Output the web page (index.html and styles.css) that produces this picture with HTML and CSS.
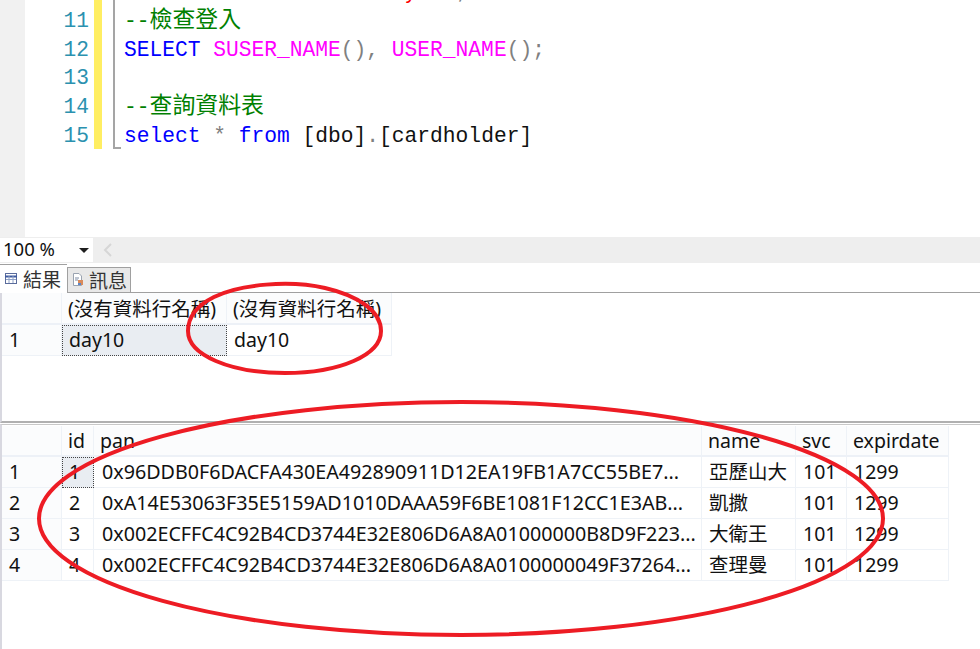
FILE: index.html
```html
<!DOCTYPE html>
<html>
<head>
  <title>SQL Query Results</title>
  <meta charset="utf-8">
  <link rel="stylesheet" href="styles.css">
</head>
<body>
  <div class="page">

    <div class="editor">
      <div class="gutter"></div>
      <div class="numbers">
        <div class="num">10</div>
        <div class="num">11</div>
        <div class="num">12</div>
        <div class="num">13</div>
        <div class="num">14</div>
        <div class="num">15</div>
      </div>
      <div class="changed"></div>
      <div class="fold"></div>
      <div class="code">
        <div class="line"><span class="kw">EXECUTE AS LOGIN</span> <span class="op">=</span> <span class="str">'day10'</span><span class="op">;</span></div>
        <div class="line comment">--<span class="cjk">檢查登入</span></div>
        <div class="line"><span class="kw">SELECT</span> <span class="fn">SUSER_NAME</span><span class="op">()</span><span class="op">,</span> <span class="fn">USER_NAME</span><span class="op">()</span><span class="op">;</span></div>
        <div class="line"></div>
        <div class="line comment">--<span class="cjk">查詢資料表</span></div>
        <div class="line"><span class="kw">select</span> <span class="op">*</span> <span class="kw">from</span> [dbo]<span class="op">.</span>[cardholder]</div>
      </div>
    </div>

    <div class="statusbar">
      <div class="zoom">100 %<span class="caret"></span></div>
      <svg class="scroll-left" width="10" height="14" viewBox="0 0 10 14"><path d="M8 1 L2 7 L8 13" fill="none" stroke="#d6d6d6" stroke-width="2"/></svg>
    </div>

    <div class="tabs">
      <div class="tab active">
        <svg class="tab-icon" width="12" height="11" viewBox="0 0 12 11"><rect x="0.5" y="0.5" width="11" height="10" fill="#fff" stroke="#5a6c9c"/><path d="M0 3.500H12" stroke="#3f5a9e" stroke-width="2"/><path d="M4 3V10M8 3V10M1 6.500H11" stroke="#8fa2c8"/></svg>
        結果
      </div>
      <div class="tab">
        <svg class="tab-icon" width="12" height="13" viewBox="0 0 12 13"><path d="M1.500 .5H7L9.500 3V12.500H1.500Z" fill="#fff" stroke="#9aa3b0"/><path d="M3 5H7M3 7H6" stroke="#7d8ba5"/><rect x="6" y="7" width="5" height="5" fill="#d98a5a"/><rect x="6" y="10" width="3" height="2" fill="#5a86c8"/></svg>
        訊息
      </div>
    </div>

    <div class="results">
      <div class="grid grid-one">
        <div class="cell head"></div>
        <div class="cell head">(沒有資料行名稱)</div>
        <div class="cell head">(沒有資料行名稱)</div>
        <div class="cell rownum">1</div>
        <div class="cell selected">day10</div>
        <div class="cell">day10</div>
      </div>
    </div>

    <div class="results second">
      <div class="grid grid-two">
        <div class="cell head"></div>
        <div class="cell head">id</div>
        <div class="cell head">pan</div>
        <div class="cell head">name</div>
        <div class="cell head">svc</div>
        <div class="cell head">expirdate</div>

        <div class="cell rownum">1</div>
        <div class="cell selected">1</div>
        <div class="cell hex">0x96DDB0F6DACFA430EA492890911D12EA19FB1A7CC55BE7...</div>
        <div class="cell">亞歷山大</div>
        <div class="cell">101</div>
        <div class="cell">1299</div>

        <div class="cell rownum">2</div>
        <div class="cell">2</div>
        <div class="cell hex">0xA14E53063F35E5159AD1010DAAA59F6BE1081F12CC1E3AB...</div>
        <div class="cell">凱撒</div>
        <div class="cell">101</div>
        <div class="cell">1299</div>

        <div class="cell rownum">3</div>
        <div class="cell">3</div>
        <div class="cell hex">0x002ECFFC4C92B4CD3744E32E806D6A8A01000000B8D9F223...</div>
        <div class="cell">大衛王</div>
        <div class="cell">101</div>
        <div class="cell">1299</div>

        <div class="cell rownum">4</div>
        <div class="cell">4</div>
        <div class="cell hex">0x002ECFFC4C92B4CD3744E32E806D6A8A0100000049F37264...</div>
        <div class="cell">查理曼</div>
        <div class="cell">101</div>
        <div class="cell">1299</div>
      </div>
    </div>

    <svg class="marks" width="980" height="649" viewBox="0 0 980 649">
      <path class="mark" d="M214 297 C240 284 290 280 325 288 C360 296 381 312 381 331 C381 355 340 373 285 373 C230 373 188 355 188 331 C188 316 198 305 214 297"/>
      <ellipse class="mark" cx="461" cy="518.500" rx="422" ry="116.500"/>
    </svg>
  </div>
</body>
</html>
```

FILE: styles.css
```css
* {
  box-sizing: border-box;
}
body {
  margin: 0;
  background: white;
  font-family: "Noto Sans", "Noto Sans CJK TC", sans-serif;
  color: #111;
}
.page {
  position: relative;
  width: 980px;
  height: 649px;
  overflow: hidden;
}
.marks {
  position: absolute;
  left: 0;
  top: 0;
}
.mark {
  fill: none;
  stroke: #ed1c24;
  stroke-width: 4px;
}

/* editor */
.editor {
  display: flex;
  height: 237px;
  background: white;
}
.gutter {
  width: 25px;
  background: #f1f1f1;
}
.numbers {
  width: 69px;
  margin-top: -22px;
  padding-right: 5px;
  text-align: right;
  font: 21.200px/28.800px "Liberation Mono", monospace;
  color: #2b91af;
}
.num {
  height: 28.800px;
}
.changed {
  width: 8px;
  height: 149px;
  background: #ffee62;
}
.fold {
  width: 8px;
  height: 149px;
  margin-left: 11px;
  border-left: 2px solid #a5a5a5;
  border-bottom: 2px solid #a5a5a5;
}
.code {
  margin-left: 3px;
  margin-top: -22px;
  font: 21.250px/28.800px "Liberation Mono", "Noto Sans CJK TC", monospace;
  color: #111;
}
.line {
  height: 28.800px;
  white-space: pre;
}
.cjk { font-size: 22.900px; }
.comment { color: #008000; }
.kw { color: #0000ff; }
.fn { color: #ff00ff; }
.op { color: #808080; }
.str { color: #ff0000; }

/* zoom bar and tabs */
.statusbar {
  display: flex;
  align-items: center;
  height: 26px;
  background: #eeeeee;
}
.zoom {
  position: relative;
  width: 93px;
  height: 24px;
  padding-left: 3px;
  background: white;
  font-size: 18.500px;
  line-height: 21px;
}
.caret {
  position: absolute;
  right: 4px;
  top: 10px;
  border-left: 5px solid transparent;
  border-right: 5px solid transparent;
  border-top: 5px solid #1e1e1e;
}
.scroll-left {
  margin-left: 10px;
}
.tabs {
  display: flex;
  align-items: flex-end;
  height: 30px;
  background: white;
  border-bottom: 1px solid #a0a0a0;
}
.tab {
  display: flex;
  align-items: center;
  gap: 5px;
  height: 25px;
  padding: 0 3px 1px 4px;
  background: #e8e8e8;
  border: 1px solid #a0a0a0;
  border-bottom: none;
  font-size: 19px;
  color: #333;
}
.tab.active {
  gap: 6px;
  height: 29px;
  margin-bottom: -1px;
  padding: 0 6px 1px 5px;
  background: white;
  border-left: none;
  border-right: none;
}

/* result grids */
.results {
  height: 130px;
  background: white;
  border-left: 2px solid #d8d8e0;
  border-bottom: 2px solid #b0b0b0;
}
.results.second {
  height: 226px;
  margin-top: 1px;
  padding-top: 1px;
  border-top: 1px solid #c8c8c8;
  border-bottom: none;
}
.grid {
  display: grid;
  font-size: 19.500px;
}
.grid-one {
  grid-template-columns: 60px 165px 165px;
  grid-template-rows: 32px 31px;
  width: 390px;
}
.grid-one .head {
  line-height: 32px;
}
.grid-two {
  grid-template-columns: 60px 32px 608px 94px 51px 102px;
  grid-auto-rows: 31px;
  width: 947px;
}
.cell {
  padding-left: 7px;
  line-height: 29px;
  white-space: nowrap;
  overflow: hidden;
  border-right: 1px solid #eef2f7;
  border-bottom: 1px solid #eef2f7;
}
.head {
  background: #fbfcfd;
  border-bottom: 2px solid #edf1f7;
  padding-left: 6px;
}
.rownum {
  background: #fbfcfd;
}
.hex {
  padding-left: 8px;
  font-size: 19.700px;
}
.selected {
  background: #e9edf2;
  outline: 1px dotted #444;
  outline-offset: -1px;
}
```
